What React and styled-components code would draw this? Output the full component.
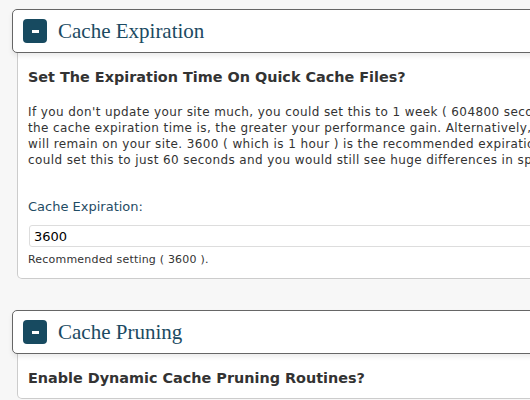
import React from 'react'
import styled, { createGlobalStyle } from 'styled-components'

const GlobalStyle = createGlobalStyle`
  html, body {
    margin: 0;
    padding: 0;
    background: #f7f7f7;
    overflow: hidden;
  }
`

const Page = styled.div`
  width: 760px;
  padding: 9px 0 0 12px;
  font-family: 'DejaVu Sans', Verdana, sans-serif;
  color: #333;
`

const Section = styled.div`
  margin-bottom: 31px;
`

const Header = styled.div`
  position: relative;
  z-index: 1;
  display: flex;
  align-items: center;
  gap: 11px;
  height: 42px;
  padding-left: 10px;
  background: #fff;
  border: 1px solid #666;
  border-radius: 5px 0 0 5px;
  box-shadow: 0 3px 5px rgba(0, 0, 0, 0.08);
`

const Toggle = styled.button`
  display: flex;
  align-items: center;
  justify-content: center;
  width: 24px;
  height: 24px;
  padding: 0;
  border: none;
  border-radius: 4px;
  background: #174a60;
  cursor: pointer;
  &::before {
    content: '';
    width: 7px;
    height: 3px;
    background: #fff;
  }
`

const Title = styled.h3`
  margin: 0;
  font-family: 'Liberation Serif', Georgia, serif;
  font-weight: normal;
  font-size: 21px;
  color: #1b4a62;
`

const Panel = styled.div`
  margin-left: 5px;
  padding: 15px 10px 11px;
  background: #fff;
  border: 1px solid #ccc;
  border-top: none;
  border-radius: 0 0 0 5px;
`

const Heading = styled.h4`
  margin: 0;
  font-size: 14.4px;
  line-height: 18px;
  font-weight: bold;
  color: #333;
`

const Text = styled.p`
  margin: 18px 0 0;
  font-size: 12px;
  line-height: 16px;
  letter-spacing: 0.4px;
  white-space: nowrap;
  color: #333;
`

const Label = styled.label`
  display: block;
  margin-top: 31px;
  font-size: 13px;
  line-height: 16px;
  color: #1f4c64;
`

const Input = styled.input`
  display: block;
  box-sizing: border-box;
  width: 100%;
  height: 22px;
  margin: 10px 0 0 1px;
  padding: 0 4px;
  border: 1px solid #ddd;
  border-radius: 3px;
  font-family: 'DejaVu Sans', Verdana, sans-serif;
  font-size: 13px;
  color: #000;
`

const Note = styled.div`
  margin-top: 6px;
  font-size: 11px;
  line-height: 14px;
  letter-spacing: 0.2px;
  color: #333;
`

const SectionHeader = ({ title }) => (
  <Header>
    <Toggle aria-label="collapse" />
    <Title>{title}</Title>
  </Header>
)

export default function App() {
  return (
    <Page>
      <GlobalStyle />
      <Section>
        <SectionHeader title="Cache Expiration" />
        <Panel>
          <Heading>Set The Expiration Time On Quick Cache Files?</Heading>
          <Text>
            If you don't update your site much, you could set this to 1 week ( 604800 seconds ) and optimize everything even further. The longer
            <br />
            the cache expiration time is, the greater your performance gain. Alternatively, the shorter the expiration time, the fresher everything
            <br />
            will remain on your site. 3600 ( which is 1 hour ) is the recommended expiration time, it's a good middle ground. That being said, you
            <br />
            could set this to just 60 seconds and you would still see huge differences in speed and performance.
          </Text>
          <Label>Cache Expiration:</Label>
          <Input defaultValue="3600" />
          <Note>Recommended setting ( 3600 ).</Note>
        </Panel>
      </Section>
      <Section>
        <SectionHeader title="Cache Pruning" />
        <Panel>
          <Heading>Enable Dynamic Cache Pruning Routines?</Heading>
        </Panel>
      </Section>
    </Page>
  )
}
